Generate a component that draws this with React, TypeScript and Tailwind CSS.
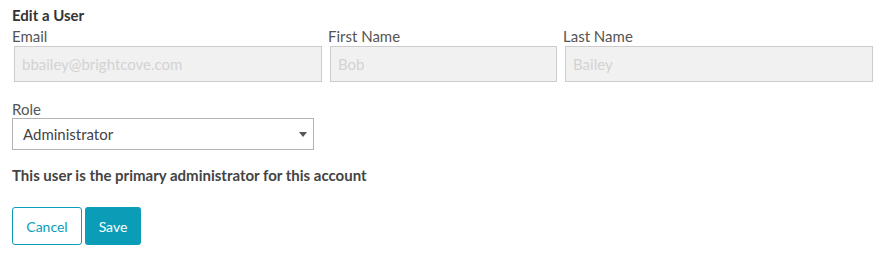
import { useState } from "react";

const font = { fontFamily: "Lato, 'Open Sans', sans-serif" };

export default function App() {
  const [role, setRole] = useState("Administrator");

  return (
    <div className="w-[885px] h-[255px] bg-white pl-[12px] pt-[5px]" style={font}>
      <h2 className="text-[15px] leading-[20px] font-bold text-[#333]">Edit a User</h2>

      <div className="mt-[1px] flex gap-[6px]">
        <Field label="Email" value="bbailey@brightcove.com" width="w-[310px]" />
        <Field label="First Name" value="Bob" width="w-[229px]" />
        <Field label="Last Name" value="Bailey" width="w-[310px]" />
      </div>

      <div className="mt-[18px]">
        <label className="block text-[15px] leading-[18px] text-[#555]">Role</label>
        <div className="relative w-[302px] h-[32px]">
          <select
            value={role}
            onChange={(e) => setRole(e.target.value)}
            className="w-full h-full appearance-none border border-[#b3b3b3] bg-white pl-[10px] text-[15px] text-[#444] outline-none"
            style={font}
          >
            <option>Administrator</option>
            <option>Publisher</option>
            <option>Viewer</option>
          </select>
          <svg
            className="absolute right-[7px] top-[14px] pointer-events-none"
            width="8"
            height="5"
            viewBox="0 0 8 5"
          >
            <path d="M0 0H8L4 5Z" fill="#555" />
          </svg>
        </div>
      </div>

      <p className="mt-[15px] text-[15px] leading-[20px] font-bold text-[#444]">
        This user is the primary administrator for this account
      </p>

      <div className="mt-[22px] flex gap-[3px]">
        <button className="w-[70px] h-[38px] rounded-[3px] border border-[#0b9db8] bg-white text-[14px] text-[#0b9db8]">
          Cancel
        </button>
        <button className="w-[56px] h-[38px] rounded-[3px] bg-[#0b9db8] text-[14px] text-white">
          Save
        </button>
      </div>
    </div>
  );
}

function Field({ label, value, width }: { label: string; value: string; width: string }) {
  return (
    <div className={width}>
      <label className="block text-[15px] leading-[20px] text-[#555]">{label}</label>
      <input
        disabled
        value={value}
        className="ml-[2px] w-[calc(100%-2px)] h-[36px] border border-[#ccc] bg-[#f1f1f1] pl-[7px] text-[15px] text-[#d3d3d3]"
        style={font}
      />
    </div>
  );
}
